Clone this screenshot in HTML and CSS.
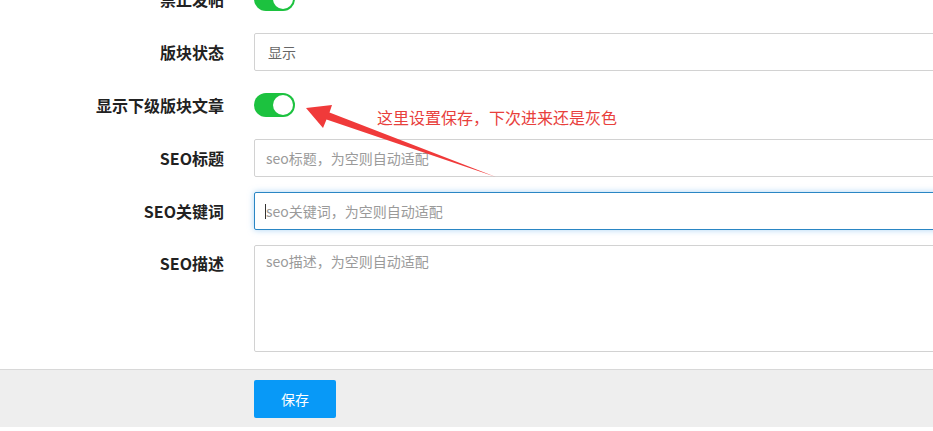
FILE: index.html
```html
<!DOCTYPE html>
<html lang="zh-CN">
<head>
<meta charset="utf-8">
<title>版块设置</title>
<link rel="stylesheet" href="styles.css">
</head>
<body>
<div class="page">
  <form class="form">
    <div class="row">
      <label class="label">禁止发帖</label>
      <div class="field"><span class="switch"><span class="knob"></span></span></div>
    </div>
    <div class="row">
      <label class="label">版块状态</label>
      <div class="field"><input class="input value" type="text" value="显示"></div>
    </div>
    <div class="row">
      <label class="label">显示下级版块文章</label>
      <div class="field"><span class="switch"><span class="knob"></span></span></div>
    </div>
    <div class="row">
      <label class="label">SEO标题</label>
      <div class="field"><input class="input" type="text" placeholder="seo标题，为空则自动适配"></div>
    </div>
    <div class="row">
      <label class="label">SEO关键词</label>
      <div class="field caret-wrap"><input class="input focused" type="text" placeholder="seo关键词，为空则自动适配"></div>
    </div>
    <div class="row row-tall">
      <label class="label">SEO描述</label>
      <div class="field"><textarea class="input textarea" placeholder="seo描述，为空则自动适配"></textarea></div>
    </div>
  </form>
  <div class="footer">
    <button class="btn" type="button">保存</button>
  </div>

  <svg class="arrow" width="933" height="431" viewBox="0 0 933 431">
    <polygon points="306,108 332,105 329.5,112.5 496,177 326.5,119.5 323,128" fill="#f03a3a"/>
  </svg>
  <div class="note">这里设置保存，下次进来还是灰色</div>
</div>
</body>
</html>
```

FILE: styles.css
```css
* { box-sizing: border-box; }

html, body {
  margin: 0;
  padding: 0;
  background: #fff;
  overflow: hidden;
}

body {
  font-family: "Noto Sans CJK SC", "Noto Sans", "Liberation Sans", sans-serif;
  color: #333;
}

.page {
  position: relative;
  width: 933px;
  height: 431px;
  overflow: hidden;
}

.form {
  margin-top: -20px;
  display: flex;
  flex-direction: column;
  gap: 15px;
}

.row {
  display: grid;
  grid-template-columns: 224px 720px;
  column-gap: 30px;
  height: 38px;
  align-items: center;
}

.row-tall {
  height: 107px;
  align-items: start;
}

.label {
  text-align: right;
  font-size: 16px;
  font-weight: bold;
  color: #222;
  line-height: 38px;
  white-space: nowrap;
}

.row-tall .label {
  line-height: 36px;
}

.field {
  display: flex;
  align-items: center;
  height: 100%;
}

.switch {
  position: relative;
  display: block;
  width: 41px;
  height: 24px;
  border-radius: 12px;
  background: #1cc23f;
}

.knob {
  position: absolute;
  right: 2px;
  top: 2px;
  width: 20px;
  height: 20px;
  border-radius: 50%;
  background: #fff;
}

.input {
  width: 720px;
  height: 38px;
  border: 1px solid #d2d2d2;
  border-radius: 2px;
  padding: 0 11px;
  font-family: "Noto Sans CJK SC", "Noto Sans", sans-serif;
  font-size: 14px;
  color: #555;
  background: #fff;
  outline: none;
}

.input::placeholder {
  color: #9a9a9a;
}

.value {
  color: #666;
  padding-left: 13px;
}

.focused {
  border-color: #2a86c4;
  box-shadow: 0 0 6px rgba(102, 175, 233, 0.55);
}

.caret-wrap {
  position: relative;
}

.caret-wrap::before {
  content: "";
  position: absolute;
  left: 11px;
  top: 12px;
  width: 1px;
  height: 15px;
  background: #333;
}

.textarea {
  height: 107px;
  padding: 5px 11px;
  resize: none;
  line-height: 20px;
  display: block;
}

.footer {
  margin-top: 17px;
  height: 58px;
  background: #eeeeee;
  border-top: 1px solid #d8d8d8;
  padding: 10px 0 0 254px;
}

.btn {
  width: 82px;
  height: 38px;
  border: none;
  border-radius: 2px;
  background: #0899f7;
  color: #fff;
  font-family: "Noto Sans CJK SC", "Noto Sans", sans-serif;
  font-size: 14px;
  padding: 0;
}

.arrow {
  position: absolute;
  left: 0;
  top: 0;
  pointer-events: none;
}

.note {
  position: absolute;
  left: 377px;
  top: 106px;
  font-size: 16px;
  line-height: 22px;
  color: #e8403c;
  white-space: nowrap;
}
```
